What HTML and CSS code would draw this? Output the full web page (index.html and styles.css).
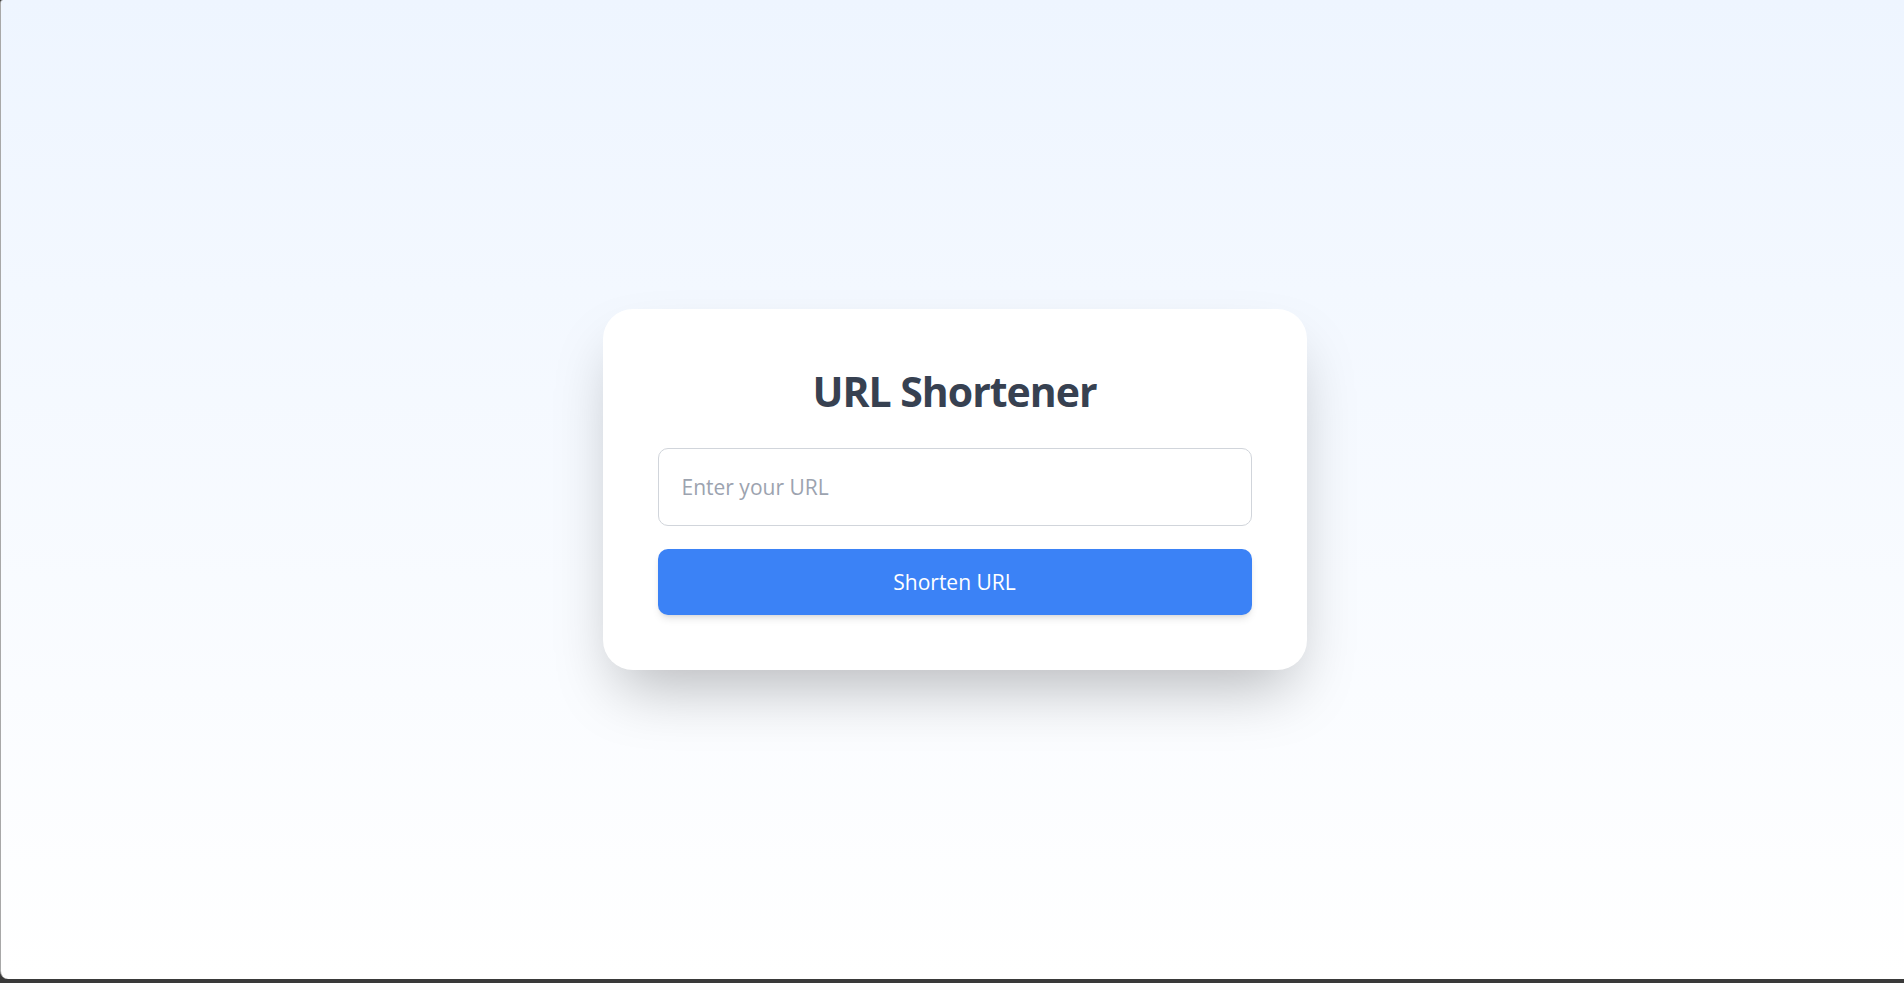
FILE: index.html
```html
<!DOCTYPE html>
<html lang="en">
<head>
<meta charset="utf-8">
<title>URL Shortener</title>
<link rel="stylesheet" href="styles.css">
</head>
<body>
<div class="window">
  <main class="card">
    <h1 class="title">URL Shortener</h1>
    <form class="form">
      <input class="url-input" type="text" placeholder="Enter your URL">
      <button class="submit" type="button">Shorten URL</button>
    </form>
  </main>
</div>
</body>
</html>
```

FILE: styles.css
```css
html, body {
  margin: 0;
  padding: 0;
  height: 100%;
}
body {
  background: #3a3a3a;
  font-family: "Open Sans", "Noto Sans", sans-serif;
  overflow: hidden;
}
.window {
  box-sizing: border-box;
  height: 979px;
  border-left: 1px solid #a8a8a8;
  border-top-left-radius: 3px;
  border-bottom-left-radius: 8px;
  background: linear-gradient(to bottom, #eef5ff 0%, #ffffff 100%);
  display: flex;
  align-items: center;
  justify-content: center;
}
.card {
  box-sizing: border-box;
  width: 704px;
  margin-left: 4px;
  padding: 55px;
  background: #ffffff;
  border-radius: 30px;
  box-shadow: 0 31px 62px -15px rgba(0, 0, 0, 0.27);
}
.title {
  margin: 5px 0 34px;
  text-align: center;
  font-size: 41px;
  line-height: 45px;
  font-weight: 700;
  color: #374151;
  letter-spacing: -1px;
}
.form {
  display: flex;
  flex-direction: column;
  gap: 23px;
}
.url-input {
  box-sizing: border-box;
  width: 100%;
  height: 78px;
  padding: 0 23px;
  border: 1px solid #d1d5db;
  border-radius: 10px;
  font-family: inherit;
  font-size: 21px;
  color: #374151;
  background: #fff;
  outline: none;
}
.url-input::placeholder {
  color: #9ca3af;
}
.submit {
  box-sizing: border-box;
  width: 100%;
  height: 66px;
  border: none;
  border-radius: 10px;
  background: #3b82f6;
  color: #ffffff;
  font-family: inherit;
  font-size: 21px;
  box-shadow: 0 5px 8px -2px rgba(0, 0, 0, 0.12), 0 2px 4px -2px rgba(0, 0, 0, 0.1);
  cursor: pointer;
}
```
